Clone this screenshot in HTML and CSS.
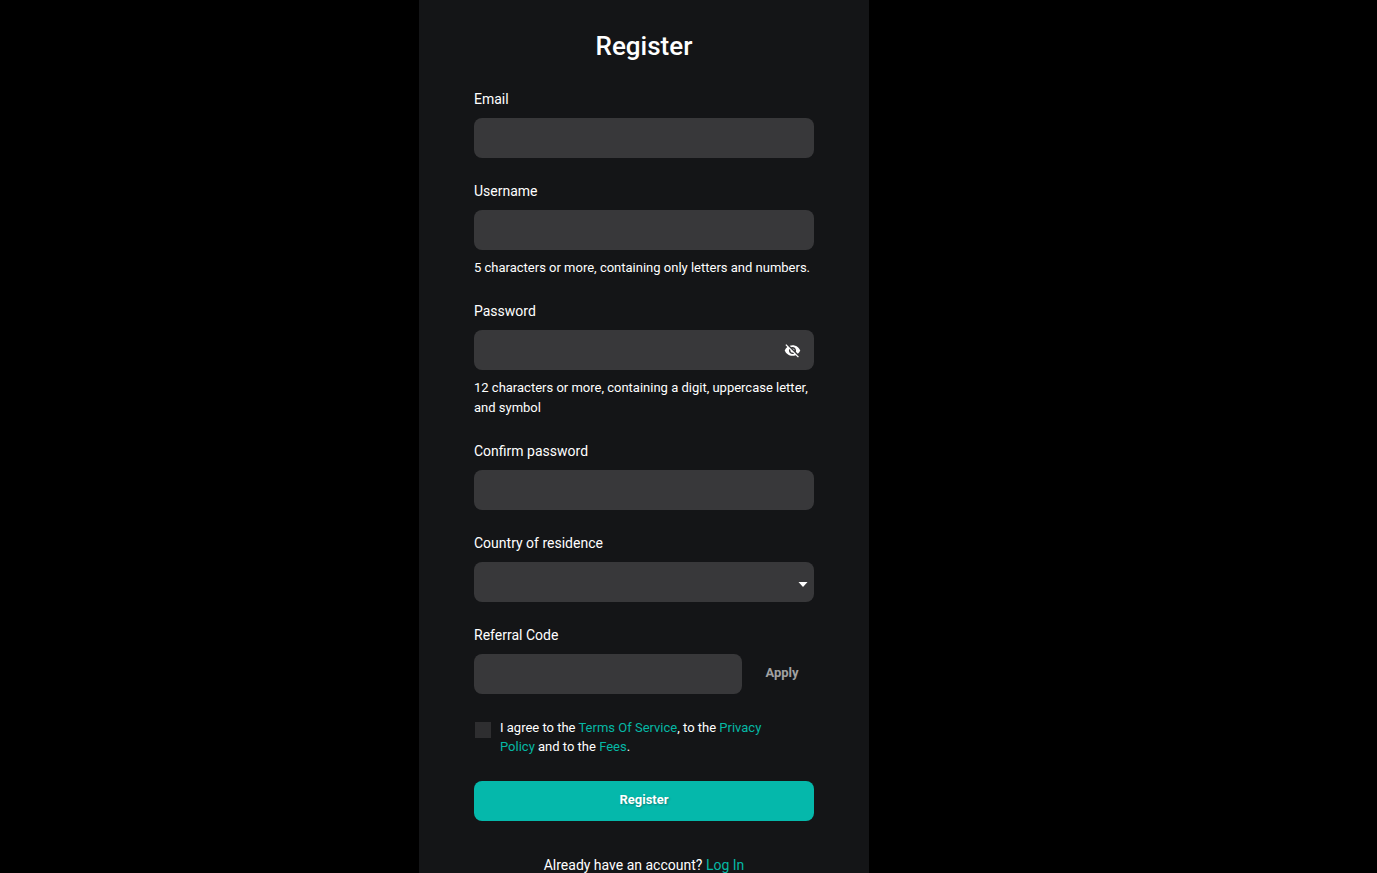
FILE: index.html
```
<!DOCTYPE html>
<html lang="en">
<head>
    <meta charset="UTF-8">
    <meta name="viewport" content="width=device-width, initial-scale=1.0">
    <title>Register</title>
    <link rel="stylesheet" href="styles.css">
</head>
<body>
    <main class="panel">
        <h1 class="title">Register</h1>
        <form class="register-form">
            <div class="field">
                <label for="email">Email</label>
                <input class="control" type="email" id="email" name="email">
            </div>
            <div class="field">
                <label for="username">Username</label>
                <input class="control" type="text" id="username" name="username" aria-describedby="username-hint">
                <p class="hint" id="username-hint">5 characters or more, containing only letters and numbers.</p>
            </div>
            <div class="field">
                <label for="password">Password</label>
                <div class="control password-box">
                    <input type="password" id="password" name="password" aria-describedby="password-hint">
                    <button type="button" class="toggle-password" aria-label="Show password">
                        <svg viewBox="0 0 24 24" width="17" height="17" fill="currentColor">
                            <path d="M12 7c2.76 0 5 2.24 5 5 0 .65-.13 1.26-.36 1.83l2.92 2.92c1.51-1.26 2.7-2.89 3.43-4.75-1.73-4.39-6-7.5-11-7.5-1.4 0-2.74.25-3.98.7l2.16 2.16C10.74 7.13 11.35 7 12 7zM2 4.27l2.28 2.28.46.46C3.08 8.3 1.78 10.02 1 12c1.73 4.39 6 7.5 11 7.5 1.55 0 3.03-.3 4.38-.84l.42.42L19.73 22 21 20.73 3.27 3 2 4.27zM7.53 9.8l1.55 1.55c-.05.21-.08.43-.08.65 0 1.66 1.34 3 3 3 .22 0 .44-.03.65-.08l1.55 1.55c-.67.33-1.41.53-2.2.53-2.76 0-5-2.24-5-5 0-.79.2-1.53.53-2.2zm4.31-.78l3.15 3.15.02-.16c0-1.66-1.34-3-3-3l-.17.01z"/>
                        </svg>
                    </button>
                </div>
                <p class="hint" id="password-hint">12 characters or more, containing a digit, uppercase letter, and symbol</p>
            </div>
            <div class="field">
                <label for="confirm">Confirm password</label>
                <input class="control" type="password" id="confirm" name="confirm">
            </div>
            <div class="field">
                <label for="country">Country of residence</label>
                <div class="control select-box">
                    <select id="country" name="country">
                        <option value=""></option>
                    </select>
                    <svg class="arrow" viewBox="0 0 10 5" width="10" height="5" fill="currentColor">
                        <path d="M0.5 0h9L5 5z"/>
                    </svg>
                </div>
            </div>
            <div class="field">
                <label for="referral">Referral Code</label>
                <div class="referral-row">
                    <input class="control" type="text" id="referral" name="referral">
                    <button type="button" class="apply">Apply</button>
                </div>
            </div>
            <div class="agree">
                <input type="checkbox" id="agree" name="agree">
                <label for="agree">I agree to the <a href="#">Terms Of Service</a>, to the <a href="#">Privacy Policy</a> and to the <a href="#">Fees</a>.</label>
            </div>
            <button type="submit" class="submit">Register</button>
        </form>
        <p class="login">Already have an account? <a href="#">Log In</a></p>
    </main>
</body>
</html>
```
FILE: styles.css
```
* {
    box-sizing: border-box;
}

body {
    margin: 0;
    padding-right: 89px;
    background-color: #000;
    color: #fff;
    font-family: Roboto, 'Liberation Sans', sans-serif;
    font-size: 14px;
    line-height: 20px;
}

a {
    color: #05b8a5;
    text-decoration: none;
}

p {
    margin: 0;
}

input,
select,
button {
    margin: 0;
    padding: 0;
    border: none;
    background: none;
    color: inherit;
    font: inherit;
}

button {
    cursor: pointer;
}

.panel {
    max-width: 450px;
    min-height: 100vh;
    margin: 0 auto;
    padding: 30px 55px 32px;
    background-color: #141517;
}

.title {
    margin: 0 0 27px;
    font-size: 26px;
    font-weight: 500;
    line-height: 32px;
    text-align: center;
}

.field {
    display: flex;
    flex-direction: column;
    margin-bottom: 23px;
}

.field label {
    margin-bottom: 9px;
}

.control {
    width: 100%;
    height: 40px;
    padding: 0 13px;
    border-radius: 8px;
    background-color: #38383a;
}

.hint {
    margin-top: 8px;
    font-size: 13px;
}

.password-box {
    display: flex;
    align-items: center;
}

.password-box input {
    flex: 1;
    min-width: 0;
    height: 100%;
}

.toggle-password {
    display: flex;
}

/* arrow sits in the same grid cell as the select */
.select-box {
    display: grid;
    align-items: center;
    padding: 0;
}

.select-box select {
    grid-area: 1 / 1;
    width: 100%;
    height: 40px;
    padding: 0 24px 0 13px;
    appearance: none;
}

.arrow {
    grid-area: 1 / 1;
    justify-self: end;
    margin: 5px 6px 0 0;
    pointer-events: none;
}

.referral-row {
    display: flex;
    align-items: center;
    gap: 8px;
}

.referral-row .control {
    flex: 1;
    min-width: 0;
}

.apply {
    width: 64px;
    height: 40px;
    padding-bottom: 2px;
    color: #a1a1a2;
    font-size: 13px;
    font-weight: 700;
}

.agree {
    display: flex;
    gap: 9px;
    padding: 0 32px 0 1px;
    margin: 24px 0 25px;
    font-size: 13px;
    line-height: 19px;
}

.agree input {
    flex: none;
    width: 16px;
    height: 16px;
    margin-top: 4px;
    background-color: #2e2e30;
    appearance: none;
}

.agree input:checked {
    background-color: #05b8ab;
}

.submit {
    width: 100%;
    height: 40px;
    padding-bottom: 2px;
    border-radius: 8px;
    background-color: #05b8ab;
    font-size: 13px;
    font-weight: 700;
    text-shadow: 1px 1px 2px rgba(0, 0, 0, 0.3);
}

.login {
    margin-top: 34px;
    text-align: center;
}
```
